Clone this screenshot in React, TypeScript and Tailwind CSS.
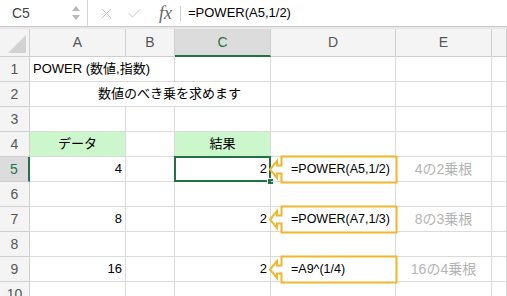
import { FC, ReactNode } from "react";
import { X, Check } from "lucide-react";

const font = { fontFamily: '"Liberation Sans", "Noto Sans CJK JP", sans-serif' };

const cols = ["A", "B", "C", "D", "E", ""];

const Cell: FC<{ className?: string; children?: ReactNode }> = ({ className = "", children }) => (
  <div className={`border-r border-b border-[#dadada] flex items-center text-[13px] text-black ${className}`}>
    {children}
  </div>
);

const RowHead: FC<{ n: number; active?: boolean }> = ({ n, active }) => (
  <div
    className={`flex items-center justify-center text-[14px] border-b border-[#cfcfcf] ${
      active ? "bg-[#dcdcdc] text-[#217346] border-r-2 border-r-[#217346]" : "bg-[#f4f4f4] text-[#555] border-r"
    }`}
  >
    {n}
  </div>
);

const Callout: FC<{ text: string }> = ({ text }) => (
  <div className="absolute -left-[3px] -top-[2px] w-[130px] h-[29px] z-10">
    <svg width="130" height="29" className="absolute inset-0">
      <path
        d="M13.5 1.5 H128.5 V27.5 H13.5 V18.5 H9 V23 L2 14.5 L9 6 V10.5 H13.5 Z"
        fill="white"
        stroke="#f2b530"
        strokeWidth="2"
        strokeLinejoin="miter"
      />
    </svg>
    <span className="absolute left-[23px] top-[6px] text-[12.5px] leading-[16px] text-black">{text}</span>
  </div>
);

const Note: FC<{ text: string }> = ({ text }) => (
  <span className="w-full text-center text-[14px] text-[#b4b4b4]">{text}</span>
);

export default function App() {
  return (
    <div className="w-[507px] h-[296px] overflow-hidden bg-white" style={font}>
      {/* formula bar */}
      <div className="h-[27px] flex items-stretch border-b border-[#c9c9c9] bg-white">
        <div className="w-[88px] flex items-center justify-between pl-[12px] pr-[6px] border-r border-[#d6d6d6]">
          <span className="text-[14px] text-[#444]">C5</span>
          <svg width="10" height="16" viewBox="0 0 10 16">
            <path d="M5 1 L9 6 H1 Z" fill="#b8b8b8" />
            <path d="M5 15 L9 10 H1 Z" fill="#b8b8b8" />
          </svg>
        </div>
        <div className="flex items-center">
          <X size={17} strokeWidth={1.4} color="#c6c6c6" className="ml-[10px]" />
          <Check size={17} strokeWidth={1.4} color="#c6c6c6" className="ml-[11px]" />
          <span
            className="ml-[16px] text-[18px] italic text-[#666]"
            style={{ fontFamily: '"Liberation Serif", serif' }}
          >
            fx
          </span>
          <div className="ml-[8px] w-px h-[15px] bg-[#d0d0d0]" />
          <span className="ml-[7px] text-[13px] text-black">=POWER(A5,1/2)</span>
        </div>
      </div>
      <div className="h-[2px] bg-[#e8e8e8]" />

      {/* sheet */}
      <div className="grid grid-cols-[30px_96px_49px_96px_125px_96px_1fr] grid-rows-[28px] auto-rows-[25px]">
        {/* header row */}
        <div className="relative bg-[#f4f4f4] border-r border-b border-[#cfcfcf]">
          <svg width="18" height="18" className="absolute right-[3px] bottom-[3px]">
            <path d="M18 0 V18 H0 Z" fill="#d2d2d2" />
          </svg>
        </div>
        {cols.map((c, i) =>
          c === "C" ? (
            <div
              key={i}
              className="flex items-center justify-center bg-[#dcdcdc] text-[#217346] text-[14px] border-r border-[#cfcfcf] border-b-2 border-b-[#217346]"
            >
              {c}
            </div>
          ) : (
            <div
              key={i}
              className="flex items-center justify-center bg-[#f4f4f4] text-[#555] text-[14px] border-r border-b border-[#cfcfcf]"
            >
              {c}
            </div>
          )
        )}

        {/* row 1 */}
        <RowHead n={1} />
        <Cell className="col-span-2 pl-[3px]">POWER (数値,指数)</Cell>
        <Cell />
        <Cell />
        <Cell />
        <Cell />

        {/* row 2 */}
        <RowHead n={2} />
        <Cell className="col-span-3 pl-[68px] text-[13.5px]">数値のべき乗を求めます</Cell>
        <Cell />
        <Cell />
        <Cell />

        {/* row 3 */}
        <RowHead n={3} />
        <Cell />
        <Cell />
        <Cell />
        <Cell />
        <Cell />
        <Cell />

        {/* row 4 */}
        <RowHead n={4} />
        <Cell className="bg-[#ccf7cc] justify-center">データ</Cell>
        <Cell />
        <Cell className="bg-[#ccf7cc] justify-center">結果</Cell>
        <Cell />
        <Cell />
        <Cell />

        {/* row 5 */}
        <RowHead n={5} active />
        <Cell className="justify-end pr-[3px]">4</Cell>
        <Cell />
        <Cell className="relative justify-end pr-[3px]">
          2
          <div className="absolute -left-px -top-px -right-px -bottom-px border-2 border-[#217346]" />
          <div className="absolute -right-[4px] -bottom-[4px] w-[7px] h-[7px] bg-[#217346] border border-white" />
        </Cell>
        <Cell className="relative">
          <Callout text="=POWER(A5,1/2)" />
        </Cell>
        <Cell>
          <Note text="4の2乗根" />
        </Cell>
        <Cell />

        {/* row 6 */}
        <RowHead n={6} />
        <Cell />
        <Cell />
        <Cell />
        <Cell />
        <Cell />
        <Cell />

        {/* row 7 */}
        <RowHead n={7} />
        <Cell className="justify-end pr-[3px]">8</Cell>
        <Cell />
        <Cell className="justify-end pr-[3px]">2</Cell>
        <Cell className="relative">
          <Callout text="=POWER(A7,1/3)" />
        </Cell>
        <Cell>
          <Note text="8の3乗根" />
        </Cell>
        <Cell />

        {/* row 8 */}
        <RowHead n={8} />
        <Cell />
        <Cell />
        <Cell />
        <Cell />
        <Cell />
        <Cell />

        {/* row 9 */}
        <RowHead n={9} />
        <Cell className="justify-end pr-[3px]">16</Cell>
        <Cell />
        <Cell className="justify-end pr-[3px]">2</Cell>
        <Cell className="relative">
          <Callout text="=A9^(1/4)" />
        </Cell>
        <Cell>
          <Note text="16の4乗根" />
        </Cell>
        <Cell />

        {/* row 10 */}
        <RowHead n={10} />
        <Cell />
        <Cell />
        <Cell />
        <Cell />
        <Cell />
        <Cell />
      </div>
    </div>
  );
}
